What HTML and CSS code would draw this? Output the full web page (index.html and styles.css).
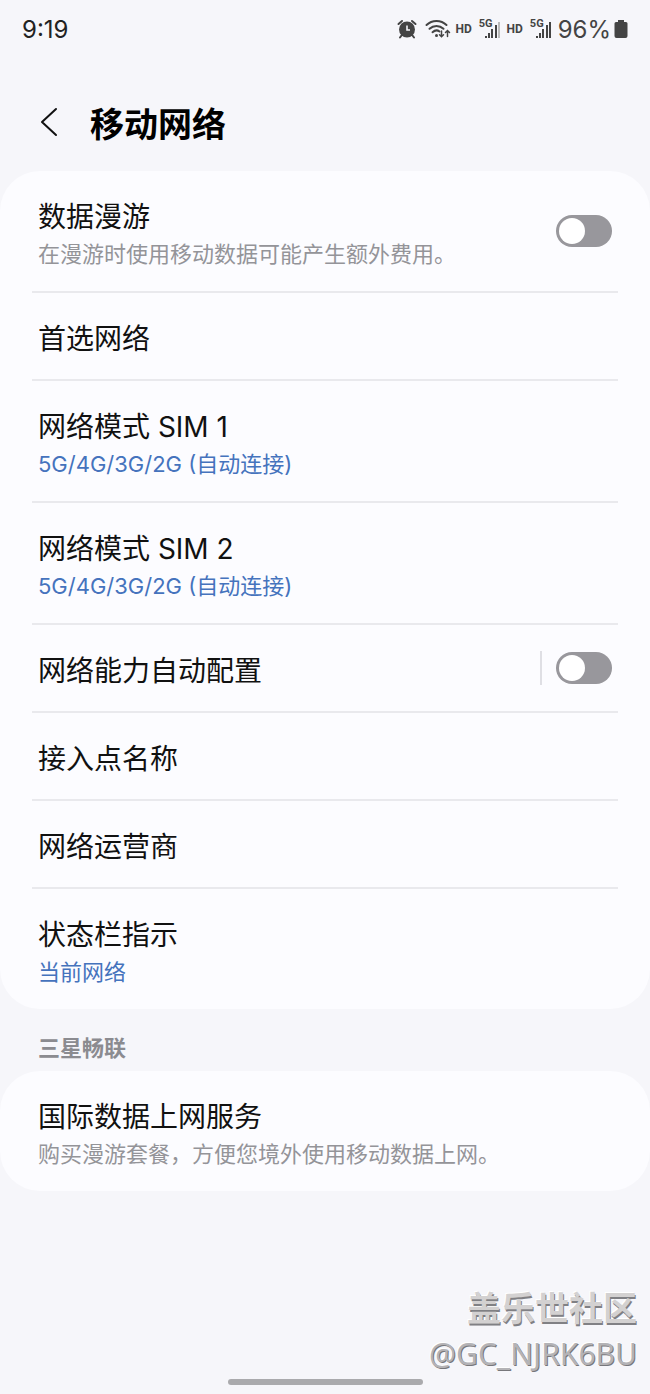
FILE: index.html
```html
<!DOCTYPE html>
<html lang="zh-CN">
<head>
    <meta charset="UTF-8">
    <meta name="viewport" content="width=device-width, initial-scale=1.0">
    <title>移动网络</title>
    <link rel="stylesheet" href="styles.css">
</head>
<body>
    <div class="status-bar">
        <span class="time">9:19</span>
        <div class="status-icons">
            <svg class="alarm" width="20" height="20" viewBox="0 0 20 20">
                <circle cx="10" cy="10.5" r="8" fill="#444"/>
                <path d="M1.500 5L5 2M18.500 5L15 2M4.500 16.500L3 18.500M15.500 16.500L17 18.500" stroke="#444" stroke-width="2" stroke-linecap="round"/>
                <path d="M10 6.500V11H13" fill="none" stroke="#f6f6fa" stroke-width="1.600"/>
            </svg>
            <svg class="wifi" width="26" height="20" viewBox="0 0 26 20" fill="none" stroke="#444" stroke-width="2" stroke-linecap="round">
                <path d="M1.500 6C7 .5 16 .5 21.500 6"/>
                <path d="M4.500 9.800C8.500 6 14.500 6 18.500 9.800"/>
                <path d="M7.500 13.200C10 11 12.500 11 14.500 12.500"/>
                <circle cx="11.500" cy="16.500" r="1.500" fill="#444" stroke="none"/>
                <path d="M16.500 12V17.500M14.500 15.800L16.500 17.800L18.500 15.800M22.500 17.500V12M20.500 13.500L22.500 11.500L24.500 13.500" stroke-width="1.500"/>
            </svg>
            <span class="hd">HD</span>
            <span class="signal">
                <span class="net">5G</span>
                <svg width="18" height="18" viewBox="0 0 18 18" fill="#444">
                    <rect x="1" y="15" width="2" height="2"/>
                    <rect x="4" y="12" width="2" height="5"/>
                    <rect x="7" y="8" width="2" height="9"/>
                    <rect x="11" y="4" width="2" height="13"/>
                    <rect x="14" y="1" width="2" height="16" fill="#bbb"/>
                </svg>
            </span>
            <span class="hd">HD</span>
            <span class="signal">
                <span class="net">5G</span>
                <svg width="18" height="18" viewBox="0 0 18 18" fill="#444">
                    <rect x="1" y="15" width="2" height="2"/>
                    <rect x="4" y="12" width="2" height="5"/>
                    <rect x="7" y="8" width="2" height="9"/>
                    <rect x="11" y="4" width="2" height="13"/>
                    <rect x="14" y="1" width="2" height="16"/>
                </svg>
            </span>
            <span class="percent">96%</span>
            <svg class="battery" width="14" height="20" viewBox="0 0 14 20">
                <path d="M4 1H10V3H12Q13.500 3 13.500 4.500V17Q13.500 19 11.500 19H2.500Q.5 19 .5 17V4.500Q.5 3 2 3H4Z" fill="#444"/>
            </svg>
        </div>
    </div>

    <header class="header">
        <button class="back" type="button" aria-label="返回">
            <svg width="20" height="32" viewBox="0 0 20 32">
                <path d="M18 2L4 15L18 28" fill="none" stroke="#111" stroke-width="2" stroke-linecap="round" stroke-linejoin="round"/>
            </svg>
        </button>
        <h1>移动网络</h1>
    </header>

    <main>
        <section class="card">
            <div class="row">
                <label class="text" for="roaming">
                    <span class="title">数据漫游</span>
                    <span class="desc">在漫游时使用移动数据可能产生额外费用。</span>
                </label>
                <input class="switch" type="checkbox" id="roaming">
            </div>
            <a class="row" href="#">
                <span class="text"><span class="title">首选网络</span></span>
            </a>
            <a class="row" href="#">
                <span class="text">
                    <span class="title">网络模式 SIM 1</span>
                    <span class="desc value">5G/4G/3G/2G (自动连接)</span>
                </span>
            </a>
            <a class="row" href="#">
                <span class="text">
                    <span class="title">网络模式 SIM 2</span>
                    <span class="desc value">5G/4G/3G/2G (自动连接)</span>
                </span>
            </a>
            <div class="row">
                <label class="text" for="auto-config">
                    <span class="title">网络能力自动配置</span>
                </label>
                <span class="separator"></span>
                <input class="switch" type="checkbox" id="auto-config">
            </div>
            <a class="row" href="#">
                <span class="text"><span class="title">接入点名称</span></span>
            </a>
            <a class="row" href="#">
                <span class="text"><span class="title">网络运营商</span></span>
            </a>
            <a class="row" href="#">
                <span class="text">
                    <span class="title">状态栏指示</span>
                    <span class="desc value">当前网络</span>
                </span>
            </a>
        </section>

        <h2>三星畅联</h2>

        <section class="card">
            <a class="row" href="#">
                <span class="text">
                    <span class="title">国际数据上网服务</span>
                    <span class="desc">购买漫游套餐，方便您境外使用移动数据上网。</span>
                </span>
            </a>
        </section>
    </main>

    <div class="home-bar"></div>

    <div class="watermark">
        <span class="community">盖乐世社区</span>
        <span class="user">@GC_NJRK6BU</span>
    </div>
</body>
</html>
```

FILE: styles.css
```css
* {
    box-sizing: border-box;
}
body {
    margin: 0;
    min-height: 100vh;
    display: flex;
    flex-direction: column;
    position: relative;
    background: #f6f6fa;
    color: #111;
    font-family: Inter, "Noto Sans CJK SC", sans-serif;
}

/* status bar */
.status-bar {
    display: flex;
    justify-content: space-between;
    align-items: center;
    height: 58px;
    padding: 0 22px;
    color: #444;
}
.time,
.percent {
    font-size: 24px;
}
.time {
    color: #222;
}
.status-icons {
    display: flex;
    align-items: center;
}
.wifi {
    margin: 0 4px 0 8px;
}
.hd {
    font-family: Roboto, sans-serif;
    font-size: 12px;
    font-weight: 700;
}
.signal {
    display: flex;
    align-items: flex-start;
    margin: 0 5px 0 7px;
}
.net {
    font-family: Roboto, sans-serif;
    font-size: 11px;
    font-weight: 700;
    line-height: 10px;
    margin-right: -9px;
}
.signal svg {
    margin-top: 2px;
}
.percent {
    margin-right: 3px;
}

/* header */
.header {
    display: flex;
    align-items: center;
    gap: 32px;
    height: 113px;
    padding: 16px 38px 0;
}
.back {
    display: flex;
    padding: 0;
    border: none;
    background: none;
    cursor: pointer;
}
h1 {
    margin: 0;
    font-size: 34px;
    font-weight: 700;
    color: #000;
}

/* cards */
.card {
    padding: 0 32px;
    border-radius: 40px;
    background: #fcfcff;
}
.row {
    display: flex;
    align-items: center;
    padding: 0 6px;
    border-bottom: 2px solid #e9e9ed;
    color: inherit;
    text-decoration: none;
}
.row:last-child {
    border-bottom: none;
}
.text {
    flex: 1;
    padding: 26px 0 20px;
}
.title,
.desc {
    display: block;
}
.title {
    font-size: 28px;
    line-height: 40px;
}
.desc {
    font-size: 22px;
    line-height: 34px;
    color: #949499;
}
.value {
    color: #4573bd;
}
h2 {
    margin: 0;
    padding: 22px 38px 6px;
    font-size: 22px;
    font-weight: 700;
    line-height: 34px;
    color: #8b8b90;
}

.switch {
    appearance: none;
    display: flex;
    align-items: center;
    width: 56px;
    height: 32px;
    margin: 0;
    padding: 0 3px;
    border-radius: 16px;
    background: #98979c;
    cursor: pointer;
}
.switch::before {
    content: "";
    width: 26px;
    height: 26px;
    border-radius: 50%;
    background: #fff;
}
.switch:checked {
    justify-content: flex-end;
    background: #4573bd;
}
.separator {
    width: 2px;
    height: 34px;
    margin-right: 14px;
    background: #dfdfe4;
}

.home-bar {
    width: 30%;
    height: 6px;
    margin: auto auto 9px;
    border-radius: 3px;
    background: #aaaaad;
}

.watermark {
    position: absolute;
    right: 13px;
    bottom: 18px;
    display: flex;
    flex-direction: column;
    align-items: flex-end;
    color: #d3d1d1;
    text-shadow: 1px 1px 0 #77777b, -1px -1px 0 #fff;
    pointer-events: none;
}
.community {
    font-size: 34px;
    font-weight: 700;
    line-height: 46px;
    text-shadow: 1px 2px 0 #808084, -1px -1px 0 #fff;
}
.user {
    font-family: "Noto Sans", sans-serif;
    font-size: 30px;
    line-height: 44px;
    color: #b4b3b6;
}
```
